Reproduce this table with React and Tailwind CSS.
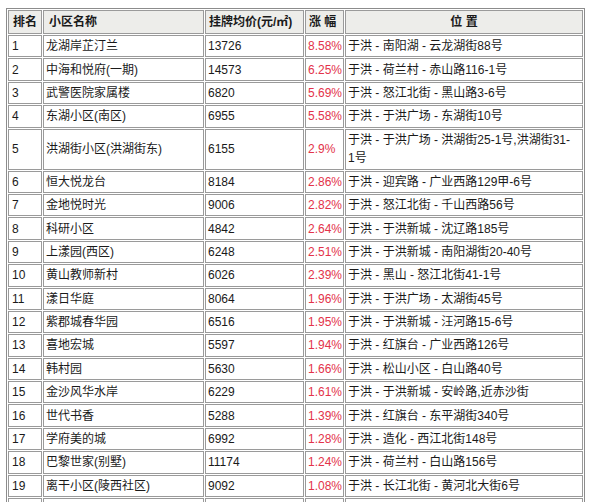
import React from "react";

const rows = [
  ["1", "龙湖岸芷汀兰", "13726", "8.58%", "于洪 - 南阳湖 - 云龙湖街88号"],
  ["2", "中海和悦府(一期)", "14573", "6.25%", "于洪 - 荷兰村 - 赤山路116-1号"],
  ["3", "武警医院家属楼", "6820", "5.69%", "于洪 - 怒江北街 - 黑山路3-6号"],
  ["4", "东湖小区(南区)", "6955", "5.58%", "于洪 - 于洪广场 - 东湖街10号"],
  ["5", "洪湖街小区(洪湖街东)", "6155", "2.9%", "__wrap"],
  ["6", "恒大悦龙台", "8184", "2.86%", "于洪 - 迎宾路 - 广业西路129甲-6号"],
  ["7", "金地悦时光", "9006", "2.82%", "于洪 - 怒江北街 - 千山西路56号"],
  ["8", "科研小区", "4842", "2.64%", "于洪 - 于洪新城 - 沈辽路185号"],
  ["9", "上漾园(西区)", "6248", "2.51%", "于洪 - 于洪新城 - 南阳湖街20-40号"],
  ["10", "黄山教师新村", "6026", "2.39%", "于洪 - 黑山 - 怒江北街41-1号"],
  ["11", "漾日华庭", "8064", "1.96%", "于洪 - 于洪广场 - 太湖街45号"],
  ["12", "紫郡城春华园", "6516", "1.95%", "于洪 - 于洪新城 - 汪河路15-6号"],
  ["13", "喜地宏城", "5597", "1.94%", "于洪 - 红旗台 - 广业西路126号"],
  ["14", "韩村园", "5630", "1.66%", "于洪 - 松山小区 - 白山路40号"],
  ["15", "金沙风华水岸", "6229", "1.61%", "于洪 - 于洪新城 - 安岭路,近赤沙街"],
  ["16", "世代书香", "5288", "1.39%", "于洪 - 红旗台 - 东平湖街340号"],
  ["17", "学府美的城", "6992", "1.28%", "于洪 - 造化 - 西江北街148号"],
  ["18", "巴黎世家(别墅)", "11174", "1.24%", "于洪 - 荷兰村 - 白山路156号"],
  ["19", "离干小区(陵西社区)", "9092", "1.08%", "于洪 - 长江北街 - 黄河北大街6号"],
  ["", "", "", "", ""],
];

const td = "border border-[#9a9a9a] px-[2px] py-0 align-middle whitespace-nowrap";

export default function App() {
  return (
    <div
      className="bg-white w-[600px] h-[502px] overflow-hidden pt-[8px] pl-[6px] text-[12px] leading-[18px] text-[#1a1a1a]"
      style={{ fontFamily: '"Liberation Sans", "Noto Sans CJK SC", sans-serif' }}
    >
      <table className="table-fixed border-separate border-spacing-[1px] border border-[#8c8c8c] w-[579px] bg-white">
        <thead>
          <tr className="h-[24px] bg-[#ededea]">
            <th className={`${td} w-[34px] px-[4px] text-left font-bold`}>排名</th>
            <th className={`${td} w-[161px] px-[5px] text-left font-bold`}>小区名称</th>
            <th className={`${td} w-[99px] px-[3px] text-left font-bold`}>挂牌均价(元/㎡)</th>
            <th className={`${td} w-[39px] px-[3px] text-left font-bold`}>涨 幅</th>
            <th className={`${td} w-[238px] text-center font-bold`}>位 置</th>
          </tr>
        </thead>
        <tbody>
          {rows.map((r, i) => (
            <tr key={i} className={r[4] === "__wrap" ? "h-[41px]" : "h-[22.4px]"}>
              <td className={`${td} px-[3px]`}>{r[0]}</td>
              <td className={td}>{r[1]}</td>
              <td className={td}>{r[2]}</td>
              <td className={`${td} px-[1px] text-[#e3334a]`}>{r[3]}</td>
              <td className={td}>
                {r[4] === "__wrap" ? (
                  <>
                    于洪 - 于洪广场 - 洪湖街25-1号,洪湖街31-
                    <br />
                    1号
                  </>
                ) : (
                  r[4]
                )}
              </td>
            </tr>
          ))}
        </tbody>
      </table>
    </div>
  );
}
